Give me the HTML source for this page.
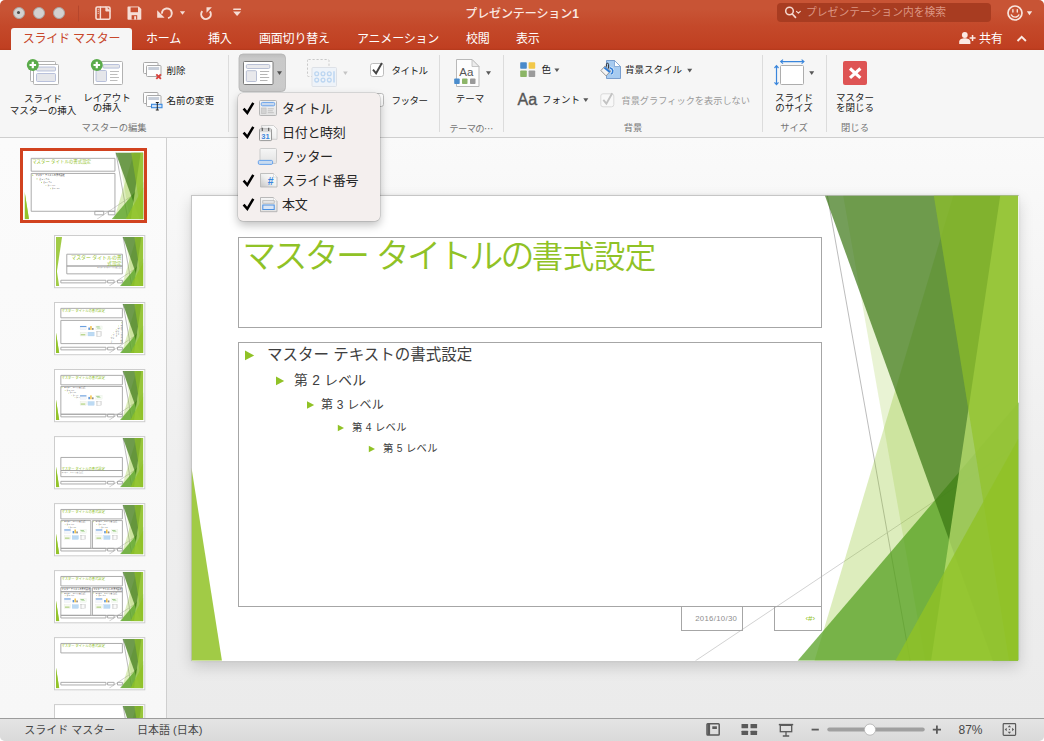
<!DOCTYPE html>
<html lang="ja">
<head>
<meta charset="utf-8">
<title>プレゼンテーション1</title>
<style>
*{box-sizing:border-box;margin:0;padding:0}
html,body{width:1044px;height:741px;overflow:hidden;background:#fff}
#win{position:absolute;left:0;top:0;width:1044px;height:741px;overflow:hidden;border-radius:5px;background:#ececec}
body{position:relative;font-family:"Liberation Sans","Noto Sans CJK JP",sans-serif;color:#222;-webkit-font-smoothing:antialiased}
.abs{position:absolute}
svg{position:absolute;overflow:visible}
/* title bar */
#titlebar{position:absolute;left:0;top:0;width:1044px;height:50px;background:linear-gradient(#c85435 0,#c85435 9px,#c4492a 26px,#c03f21 48px,#b4391c 50px)}
.tl{position:absolute;top:6.500px;width:12.500px;height:12.500px;border-radius:50%;background:#d3d1d0;border:1px solid #a9a3a1}
.tl i{position:absolute;left:3.750px;top:3.750px;width:3px;height:3px;border-radius:50%;background:#4c4c4c}
#wtitle{position:absolute;left:0;width:1044px;top:5px;text-align:center;color:#fbe9e3;font-size:12px;line-height:18px;letter-spacing:-.1px;font-weight:500}
#search{position:absolute;left:777px;top:3px;width:214px;height:19px;border-radius:4px;background:#a83c21}
#search span{position:absolute;left:29px;top:0;line-height:19px;font-size:10.800px;color:#dc9683;white-space:nowrap}
.tab{position:absolute;top:29px;height:21px;line-height:20px;font-size:12px;color:#fff;white-space:nowrap;letter-spacing:-.2px}
#tabactive{position:absolute;left:11px;top:28px;width:121px;height:23px;background:#f6f6f6;border-radius:3px 3px 0 0}
#tabactive span{position:absolute;left:0;width:121px;text-align:center;top:1px;line-height:20px;font-size:12px;color:#c8472b;white-space:nowrap;letter-spacing:-.2px}
/* ribbon */
#ribbon{position:absolute;left:0;top:50px;width:1044px;height:88px;background:#f6f6f6;border-bottom:1px solid #cfcfcf}
.rl{position:absolute;font-size:9.5px;line-height:10px;color:#1a1a1a;white-space:nowrap;font-weight:400;text-align:center}
.gl{position:absolute;font-size:9.3px;line-height:12px;color:#757575;white-space:nowrap;text-align:center;top:121.500px}
.sep{position:absolute;top:55px;width:1px;height:77px;background:#dcdcdc}
.dis{color:#9a9a9a}
/* panels */
#thumbs{position:absolute;left:0;top:138px;width:167px;height:580px;background:linear-gradient(#fbfbfb,#f7f7f7);border-right:1px solid #cfcfcf;overflow:hidden}
#edit{position:absolute;left:167px;top:138px;width:877px;height:580px;background:linear-gradient(#fafafa 0,#f6f6f6 20%,#efefef 55%,#ebebeb 100%);overflow:hidden}
#status{position:absolute;left:0;top:718px;width:1044px;height:23px;background:linear-gradient(#e4e4e4,#d9d9d9);border-top:1px solid #9c9c9c;font-size:11px;color:#484848}
#status span{position:absolute;top:3.500px;line-height:14px;white-space:nowrap}
#slide{position:absolute;left:24px;top:57px;width:828px;height:466px;background:#fff;border:0 solid #c6c6c6;border-width:1px 0 0 1px;box-shadow:0 6px 14px rgba(0,0,0,.15),0 0 3px rgba(0,0,0,.07)}
/* popup */
#popup{position:absolute;left:238px;top:93px;width:142px;height:128px;background:#f4efee;border-radius:5px;box-shadow:0 0 0 .5px rgba(0,0,0,.2),0 4px 10px rgba(0,0,0,.26)}
.mi{position:absolute;left:44px;font-size:13px;line-height:24px;color:#262626;white-space:nowrap;letter-spacing:-.3px}
.ck{position:absolute;left:5px;width:14px;height:12px}
</style>
</head>
<body>
<div id="win">
<svg width="0" height="0" style="position:absolute">
<defs>
<g id="facet">
  <line x1="9371" y1="0" x2="10590.2" y2="6858" stroke="#ababab" stroke-width=".8" vector-effect="non-scaling-stroke"/>
  <line x1="12181" y1="3681.4" x2="7425.3" y2="6858" stroke="#c6c6c6" stroke-width=".8" vector-effect="non-scaling-stroke"/>
  <polygon points="11227,0 12181,0 12181,6858 9181.5,6858" fill="#90c226" fill-opacity=".30"/>
  <polygon points="9603.4,0 12181,0 12181,6858 10811.7,6858" fill="#90c226" fill-opacity=".20"/>
  <polygon points="12192,3048 12192,6858 8932.3,6858" fill="#4f9c1a" fill-opacity=".72"/>
  <polygon points="9334.5,0 12181,0 12181,6858 11808.4,6858" fill="#397512" fill-opacity=".70"/>
  <polygon points="11918.5,0 12181,0 12181,6858 10898.7,6858" fill="#c0e474" fill-opacity=".70"/>
  <polygon points="10939,0 12181,0 12181,6858 12048.4,6858" fill="#90c226" fill-opacity=".65"/>
  <polygon points="12181,3589.9 12181,6858 10371.7,6858" fill="#90c226" fill-opacity=".80"/>
  <polygon points="0,4013.2 0,6858 448.7,6858" fill="#90c226" fill-opacity=".85"/>
</g>
</defs>
</svg>
<div id="titlebar">
  <div class="tl" style="left:12.700px"><i></i></div><div class="tl" style="left:32.700px"></div><div class="tl" style="left:52.700px"></div>
  <svg id="tbsvg" width="1044" height="50" viewBox="0 0 1044 50" style="left:0;top:0;z-index:3">
  <g fill="none" stroke="#f6ddd5" stroke-width="1.600" stroke-linejoin="round" stroke-linecap="round">
    <line x1="78.500" y1="6" x2="78.500" y2="21" stroke="#b5462c" stroke-width="1"/>
    <!-- sidebar -->
    <rect x="96" y="7" width="14" height="12.300" rx="1.200"/>
    <line x1="100.400" y1="7" x2="100.400" y2="19.300" stroke-width="1.400"/>
    <path d="M105.800 7.200v3.900h4.200z" fill="#f6ddd5" stroke-width=".8"/>
    <path d="M98.100 9.300h.3M98.100 11.300h.3M98.100 13.300h.3" stroke-width="1"/>
    <!-- save -->
    <path d="M128.300 7.200h10.200l2 2v9.800h-12.200z" fill="#f6ddd5" stroke-width="1.600"/>
    <rect x="130.600" y="7.400" width="7.400" height="4.800" fill="#c94e2f" stroke="none"/>
    <rect x="131.600" y="15.200" width="5.600" height="4.400" fill="#c94e2f" stroke="none"/>
    <rect x="134.200" y="16.200" width="1.900" height="3.400" fill="#f6ddd5" stroke="none"/>
    <!-- undo -->
    <path d="M162 13.700a4.900 4.900 0 1 1 6 4.400" stroke-width="2" stroke-linecap="butt"/>
    <path d="M157.200 10.200v7.600h7.400z" fill="#f6ddd5" stroke="none"/>
    <path d="M179.900 11.300h5.200l-2.600 3.500z" fill="#f6ddd5" stroke="none"/>
    <!-- redo -->
    <path d="M202.300 11.200a4.800 4.800 0 1 0 7.600 .2" stroke-width="2" stroke-linecap="butt"/>
    <path d="M206.500 7.200h5.400l-5.400 5.500z" fill="#f6ddd5" stroke="none"/>
    <!-- customize -->
    <line x1="233.800" y1="9.200" x2="240.400" y2="9.200" stroke-width="1.500"/>
    <path d="M233.100 11.600h8l-4 4.300z" fill="#f6ddd5" stroke="none"/>
    <!-- search glass -->
    <circle cx="789.500" cy="11" r="3.800" stroke="#f4d8cf" stroke-width="1.500"/>
    <line x1="792.300" y1="14" x2="795.500" y2="17.300" stroke="#f4d8cf" stroke-width="1.700"/>
    <path d="M796.500 11.300l1.900 1.900 1.900-1.900" stroke="#f4d8cf" stroke-width="1.200"/>
    <!-- smiley -->
    <circle cx="1015" cy="13" r="7" stroke="#f8e4dd" stroke-width="1.7"/>
    <path d="M1011.3 14.9c1.6 3 6 3 7.6 0" stroke="#f8e4dd" stroke-width="1.300"/>
    <path d="M1012.9 9.6v2.4M1017.3 9.6v2.4" stroke="#f8e4dd" stroke-width="1.400"/>
    <path d="M1026.8 11.2h5.400l-2.700 4z" fill="#f8e4dd" stroke="none"/>
    <!-- share person -->
    <g fill="#fbeae4" stroke="none">
      <circle cx="964.800" cy="35" r="2.900"/>
      <path d="M959.200 44v-2.200c0-2.600 3-3.600 5.600-3.600s5.600 1 5.600 3.600v2.200z"/>
      <path d="M969.600 37.300h2.200v-2.300h1.500v2.300h2.300v1.500h-2.300v2.300h-1.500v-2.300h-2.200z"/>
    </g>
    <path d="M1017.500 41l4.200-4.200 4.200 4.200" stroke="#fbeae4" stroke-width="1.900" stroke-linejoin="miter" stroke-linecap="butt"/>
  </g>
</svg>
  <div id="wtitle">プレゼンテーション<b>1</b></div>
  <div id="search"><span>プレゼンテーション内を検索</span></div>
  <div id="tabactive"><span>スライド マスター</span></div>
  <div class="tab" style="left:146px">ホーム</div>
  <div class="tab" style="left:208px">挿入</div>
  <div class="tab" style="left:259px">画面切り替え</div>
  <div class="tab" style="left:357px">アニメーション</div>
  <div class="tab" style="left:466px">校閲</div>
  <div class="tab" style="left:516px">表示</div>
  <div class="tab" style="left:979px">共有</div>
</div>
<div id="ribbon"></div>
<svg id="ribsvg" width="1044" height="88" viewBox="0 50 1044 88" style="left:0;top:50px">
  <defs>
    <linearGradient id="gbtn" x1="0" y1="0" x2="0" y2="1"><stop offset="0" stop-color="#bdbdbd"/><stop offset=".12" stop-color="#c9c9c9"/><stop offset="1" stop-color="#cbcbcb"/></linearGradient>
  </defs>
  <!-- insert slide master -->
  <g stroke="#b2b2b2" stroke-width="1" fill="#fff">
    <rect x="30.500" y="61.500" width="25" height="20" rx="1"/>
    <rect x="33.500" y="64.500" width="25" height="20" rx="1"/>
    <g fill="#e5e6ea" stroke="#aab4d4" stroke-width=".8">
      <rect x="36.500" y="67" width="19" height="4" rx="1"/>
      <rect x="36.500" y="73.500" width="19" height="8" rx="1"/>
    </g>
  </g>
  <circle cx="32.800" cy="65" r="6" fill="#5aab4a"/>
  <path d="M29.500 65h6.600M32.800 61.700v6.600" stroke="#fff" stroke-width="2.200"/>
  <!-- insert layout -->
  <g stroke="#b2b2b2" stroke-width="1" fill="#fff">
    <rect x="93.500" y="61.500" width="29" height="23" rx="1"/>
    <g fill="#e5e6ea" stroke="#aab4d4" stroke-width=".8">
      <rect x="103" y="64.500" width="16.500" height="3.600" rx="1"/>
      <rect x="96" y="70.500" width="10.500" height="11" rx="1"/>
    </g>
    <path d="M110 71.500h9M110 74.500h7.500M110 77.500h9M110 80.500h7.500" stroke="#bdbdbd" stroke-width="1"/>
  </g>
  <circle cx="96.800" cy="65" r="6" fill="#5aab4a"/>
  <path d="M93.500 65h6.600M96.800 61.700v6.600" stroke="#fff" stroke-width="2.200"/>
  <!-- delete -->
  <g stroke="#a9a9a9" stroke-width="1" fill="#fdfdfd">
    <rect x="143.500" y="62.500" width="14.500" height="11" rx="1"/>
    <rect x="146.500" y="65.500" width="14.500" height="11" rx="1"/>
    <rect x="148.300" y="67" width="10.800" height="3" fill="#c7ced9" stroke="none"/>
  </g>
  <path d="M156.300 74.300l4.600 4.600M160.900 74.300l-4.600 4.600" stroke="#d8413c" stroke-width="1.900"/>
  <!-- rename -->
  <g stroke="#a9a9a9" stroke-width="1" fill="#fdfdfd">
    <rect x="143.500" y="92.500" width="14.500" height="11" rx="1"/>
    <rect x="146.500" y="95.500" width="14.500" height="11" rx="1"/>
    <rect x="148.300" y="97" width="10.800" height="3" fill="#c7ced9" stroke="none"/>
  </g>
  <rect x="151.500" y="104.300" width="10.500" height="3.400" fill="#cfe2f8" stroke="#3b8ae0" stroke-width="1.100"/>
  <path d="M155.800 102.500h3M155.800 110h3M157.300 102.500v7.500" stroke="#222" stroke-width="1"/>
  <!-- master layout (pressed) -->
  <rect x="239" y="54" width="46.500" height="37.500" rx="4" fill="url(#gbtn)" stroke="#b4b4b4" stroke-width=".8"/>
  <g stroke="#7a7a7a" stroke-width="1" fill="#fff">
    <rect x="243.500" y="61.500" width="29.500" height="23" rx="1"/>
    <g fill="#e9e9ec" stroke="#aab2cc" stroke-width=".8">
      <rect x="246.300" y="64.500" width="23.500" height="4" rx="1.200"/>
      <rect x="246.300" y="70.700" width="10.200" height="10.800" rx="1"/>
    </g>
    <path d="M260 71.500h9.200M260 74.500h7.500M260 77.500h9.200M260 80.500h7.500" stroke="#b5b5b5" stroke-width="1"/>
  </g>
  <path d="M277 71.200h5l-2.5 3.7z" fill="#505050"/>
  <!-- insert placeholder (disabled) -->
  <rect x="307.500" y="59.500" width="21.500" height="17" rx="1" fill="none" stroke="#c9c9c9" stroke-width="1" stroke-dasharray="2.200 1.800"/>
  <rect x="312" y="67.500" width="24.500" height="19" rx="1" fill="#eef3f9" stroke="#dde1e7" stroke-width="1"/>
  <g fill="none" stroke="#bcd6f1" stroke-width="1.300">
    <circle cx="316.700" cy="73.700" r="1.900"/><circle cx="323" cy="73.700" r="1.900"/><circle cx="329.300" cy="73.700" r="1.900"/>
    <circle cx="316.700" cy="80.100" r="1.900"/><circle cx="323" cy="80.100" r="1.900"/><circle cx="329.300" cy="80.100" r="1.900"/>
    <path d="M334 71.200v11.200" stroke-width="1.500"/>
  </g>
  <path d="M343.100 71.500h4.600l-2.300 3.500z" fill="#c4c4c4"/>
  <!-- checkboxes -->
  <rect x="370.500" y="63.500" width="13" height="13" rx="2.200" fill="#fff" stroke="#bdbdbd"/>
  <path d="M373 69.600l3.100 3.700 5.800-10.300" fill="none" stroke="#454545" stroke-width="1.900"/>
  <rect x="370.500" y="93.500" width="13" height="13" rx="2.200" fill="#fff" stroke="#bdbdbd"/>
  <!-- theme -->
  <path d="M456.500 59.500h15.500l7 7v20h-22.500z" fill="#fdfdfd" stroke="#b9b9b9"/>
  <path d="M472 59.500v7h7z" fill="#ececec" stroke="#b9b9b9" stroke-width=".8"/>
  <rect x="454.200" y="78.400" width="5.500" height="5.600" rx=".8" fill="#4a8ccc"/>
  <rect x="462" y="78.400" width="5.500" height="5.600" rx=".8" fill="#8db568"/>
  <rect x="470" y="78.400" width="5.500" height="5.600" rx=".8" fill="#9a9a9a"/>
  <text x="466.300" y="75.600" font-family="'Liberation Sans',sans-serif" font-size="11.500" fill="#555" text-anchor="middle">Aa</text>
  <path d="M486 71.300h5l-2.5 3.7z" fill="#585858"/>
  <!-- colors -->
  <rect x="520.200" y="62.200" width="6.600" height="6.600" rx=".8" fill="#4a8acb"/>
  <rect x="528.600" y="62.200" width="6.600" height="6.600" rx=".8" fill="#f2c849"/>
  <rect x="520.200" y="70.400" width="6.600" height="6.600" rx=".8" fill="#8bb566"/>
  <rect x="528.600" y="70.400" width="6.600" height="6.600" rx=".8" fill="#9b9b9b"/>
  <path d="M554.400 68.400h5l-2.5 3.7z" fill="#585858"/>
  <!-- fonts -->
  <text x="517.600" y="104.500" font-family="'Liberation Sans',sans-serif" font-size="16" fill="#555" stroke="#555" stroke-width=".35">Aa</text>
  <path d="M583.300 98.300h5l-2.5 3.7z" fill="#585858"/>
  <!-- background styles -->
  <path d="M606.5 60.5h8l6 6v12h-14z" fill="#a7cbf0" stroke="#6f96c9" stroke-width=".9"/>
  <path d="M614.5 60.5v6h6z" fill="#fff" stroke="#6f96c9" stroke-width=".7"/>
  <path d="M609.8 67.8c3.600 .8 4 4.300 1.400 6.400" fill="none" stroke="#e8f2fc" stroke-width="2.800"/>
  <path d="M609.8 67.8c3.600 .8 4 4.300 1.400 6.400" fill="none" stroke="#2e7bd6" stroke-width="1.600"/>
  <path d="M600.9 70.6l4-4.500 5.700 4.900-4.500 4.900z" fill="#f3f3f3" stroke="#8b8b8b" stroke-width=".9"/>
  <path d="M604.3 67.4l5.500 4.500" stroke="#2e7bd6" stroke-width="2"/>
  <path d="M606.4 66.5v-2c0-1.700 2.200-1.700 2.200 0v4" fill="none" stroke="#2b2b2b" stroke-width="1"/>
  <path d="M687.2 68.800h5l-2.500 3.700z" fill="#585858"/>
  <!-- hide bg graphics checkbox -->
  <rect x="600.800" y="93.800" width="13" height="13" rx="2.200" fill="#f8f8f8" stroke="#dadada"/>
  <path d="M603.300 99.900l3.100 3.700 5.800-10.300" fill="none" stroke="#c2c2c2" stroke-width="1.900"/>
  <!-- slide size -->
  <rect x="780.500" y="65.500" width="23" height="19" rx="1" fill="#fff" stroke="#adadad"/>
  <g stroke="#3a86dc" stroke-width="1.200" fill="none">
    <path d="M781 61.600h22.600M776.500 66v18.300"/>
    <path d="M783 59.600l-2.300 2 2.300 2M801.600 59.600l2.300 2-2.300 2M774.500 68l2-2.300 2 2.300M774.500 82.300l2 2.300 2-2.300"/>
  </g>
  <path d="M809.200 71.300h5l-2.5 3.7z" fill="#585858"/>
  <!-- close master -->
  <rect x="843" y="61" width="24" height="24" rx="2" fill="#de5454"/>
  <path d="M850 68.500l10.400 9.400M860.400 68.500l-10.400 9.400" stroke="#fff" stroke-width="3.100"/>
</svg>
<div class="sep" style="left:228px"></div>
<div class="sep" style="left:439px"></div>
<div class="sep" style="left:503px"></div>
<div class="sep" style="left:762px"></div>
<div class="sep" style="left:826px"></div>
<div class="rl" style="left:0;width:86px;top:93px;line-height:11.500px">スライド<br>マスターの挿入</div>
<div class="rl" style="left:64px;width:86px;top:93px;line-height:10.300px">レイアウト<br>の挿入</div>
<div class="rl" style="left:166.5px;top:66px">削除</div>
<div class="rl" style="left:166.5px;top:95.6px">名前の変更</div>
<div class="rl" style="left:391.6px;top:66px;letter-spacing:-.55px">タイトル</div>
<div class="rl" style="left:391.6px;top:96px;letter-spacing:-.55px">フッター</div>
<div class="rl" style="left:427px;width:86px;top:94px">テーマ</div>
<div class="rl" style="left:541.500px;top:64.500px">色</div>
<div class="rl" style="left:542px;top:95px">フォント</div>
<div class="rl" style="left:625px;top:65px">背景スタイル</div>
<div class="rl dis" style="left:621.500px;top:95.500px;font-weight:400;font-size:9.200px">背景グラフィックを表示しない</div>
<div class="rl" style="left:751px;width:86px;top:92.500px;line-height:10px">スライド<br>のサイズ</div>
<div class="rl" style="left:812px;width:86px;top:93px;line-height:10px">マスター<br>を閉じる</div>
<div class="gl" style="left:64px;width:100px">マスターの編集</div>
<div class="gl" style="left:421px;width:100px;letter-spacing:-.6px">テーマの<span style="font-family:'Noto Sans CJK JP','Liberation Sans',sans-serif">…</span></div>
<div class="gl" style="left:583px;width:100px">背景</div>
<div class="gl" style="left:744px;width:100px">サイズ</div>
<div class="gl" style="left:805px;width:100px">閉じる</div>

<div id="thumbs">
<svg width="166" height="580" viewBox="0 138 166 580" style="left:0;top:0" font-family="'Liberation Sans','Noto Sans CJK JP',sans-serif">
<defs><clipPath id="fclip"><rect x="0" y="0" width="12192" height="6858"/></clipPath></defs>
<rect x="21.500" y="149.500" width="124" height="72" fill="#fff" stroke="#d1421f" stroke-width="3"/>
<g transform="translate(24.6,152.4) scale(0.009744)" clip-path="url(#fclip)"><use href="#facet"/><polygon points="0,4013.2 0,6858 448.7,6858" fill="#90c226" fill-opacity=".85"/><rect x="677.3" y="609.6" width="8596.7" height="1320.8" fill="none" stroke="#a3a3a3" stroke-width=".9" vector-effect="non-scaling-stroke"/><text x="774" y="1054" font-size="457" fill="#90c226" font-weight="400">マスター タイトルの書式設定</text><rect x="677.3" y="2160.6" width="8596.7" height="3880.8" fill="none" stroke="#a3a3a3" stroke-width=".9" vector-effect="non-scaling-stroke"/><rect x="7205.1" y="6041.4" width="911.9" height="365.1" fill="none" stroke="#a3a3a3" stroke-width=".9" vector-effect="non-scaling-stroke"/><rect x="8590.7" y="6041.4" width="683.3" height="365.1" fill="none" stroke="#a3a3a3" stroke-width=".9" vector-effect="non-scaling-stroke"/><path d="M788.3 2268l132.82 66-132.82 66z" fill="#90c226"/><text x="1112" y="2417" font-size="229" fill="#404040">マスター テキストの書式設定</text><path d="M1237.3 2661l117.74 59-117.74 59z" fill="#90c226"/><text x="1510" y="2793" font-size="203" fill="#404040">第 2 レベル</text><path d="M1694.3 3024l103.24 52-103.24 52z" fill="#90c226"/><text x="1908" y="3140" font-size="178" fill="#404040">第 3 レベル</text><path d="M2166.3 3372l88.16 44-88.16 44z" fill="#90c226"/><text x="2365" y="3471" font-size="152" fill="#404040">第 4 レベル</text><path d="M2623.3 3682l88.16 44-88.16 44z" fill="#90c226"/><text x="2822" y="3781" font-size="152" fill="#404040">第 5 レベル</text></g>
<rect x="54.500" y="235.5" width="90.300" height="52.200" fill="#fff" stroke="#cdcdcd" stroke-width="1"/>
<g transform="translate(56,237.0) scale(0.007160)" clip-path="url(#fclip)"><use href="#facet"/><polygon points="0,0 842.6,0 0,5666.2" fill="#90c226" fill-opacity=".85"/><rect x="1507" y="2404.5" width="7767" height="1646.3" fill="none" stroke="#a3a3a3" stroke-width=".9" vector-effect="non-scaling-stroke"/><rect x="1507" y="4050.8" width="7767" height="1096.9" fill="none" stroke="#a3a3a3" stroke-width=".9" vector-effect="non-scaling-stroke"/><rect x="677.3" y="6041.4" width="6297.6" height="365.1" fill="none" stroke="#a3a3a3" stroke-width=".9" vector-effect="non-scaling-stroke"/><rect x="7205.1" y="6041.4" width="911.9" height="365.1" fill="none" stroke="#a3a3a3" stroke-width=".9" vector-effect="non-scaling-stroke"/><rect x="8590.7" y="6041.4" width="683.3" height="365.1" fill="none" stroke="#a3a3a3" stroke-width=".9" vector-effect="non-scaling-stroke"/><text x="9180" y="3120" font-size="686" fill="#90c226" font-weight="400" text-anchor="end">マスター タイトルの書</text><text x="9180" y="3900" font-size="686" fill="#90c226" font-weight="400" text-anchor="end">式設定</text><text x="9180" y="4330" font-size="229" fill="#7f7f7f" text-anchor="end">マスター サブタイトルの書式設定</text></g>
<rect x="54.500" y="302.5" width="90.300" height="52.200" fill="#fff" stroke="#cdcdcd" stroke-width="1"/>
<g transform="translate(56,304.0) scale(0.007160)" clip-path="url(#fclip)"><use href="#facet"/><polygon points="0,4013.2 0,6858 448.7,6858" fill="#90c226" fill-opacity=".85"/><rect x="677.3" y="609.6" width="8596.7" height="1320.8" fill="none" stroke="#a3a3a3" stroke-width=".9" vector-effect="non-scaling-stroke"/><text x="774" y="1054" font-size="457" fill="#90c226" font-weight="400">マスター タイトルの書式設定</text><rect x="677.3" y="2290" width="8596.7" height="3240" fill="none" stroke="#a3a3a3" stroke-width=".9" vector-effect="non-scaling-stroke"/><rect x="677.3" y="6041.4" width="6297.6" height="365.1" fill="none" stroke="#a3a3a3" stroke-width=".9" vector-effect="non-scaling-stroke"/><rect x="7205.1" y="6041.4" width="911.9" height="365.1" fill="none" stroke="#a3a3a3" stroke-width=".9" vector-effect="non-scaling-stroke"/><rect x="8590.7" y="6041.4" width="683.3" height="365.1" fill="none" stroke="#a3a3a3" stroke-width=".9" vector-effect="non-scaling-stroke"/><rect x="3360" y="3070" width="880" height="545" fill="#f4f6fa" stroke="#d5dbe6" stroke-width="30"/><rect x="3360" y="3070" width="880" height="150" fill="#6aa0e0"/><rect x="4520" y="3290" width="220" height="325" fill="#5b95d8"/><rect x="4770" y="3080" width="220" height="535" fill="#f3c44f"/><rect x="5030" y="3350" width="220" height="265" fill="#8c8c8c"/><rect x="5560" y="3070" width="880" height="545" fill="#f5faf2" stroke="#dfe9d8" stroke-width="30"/><rect x="5620" y="3150" width="480" height="100" fill="#86bf70"/><rect x="5740" y="3330" width="480" height="90" fill="#a8d496"/><rect x="3360" y="3925" width="880" height="545" fill="#f7f9f2" stroke="#d9dccf" stroke-width="30"/><rect x="3450" y="4195" width="640" height="190" fill="#b9d68f"/><rect x="4460" y="3925" width="880" height="545" fill="#bcdaf3" stroke="#9cc4ea" stroke-width="30"/><rect x="5640" y="3885" width="720" height="625" fill="#f2f2f2" stroke="#9b9b9b" stroke-width="30"/><rect x="5800" y="3885" width="400" height="625" fill="#fafafa" stroke="#b5b5b5" stroke-width="30"/><g transform="translate(9050,2480) rotate(90)"><path d="M111.0 -153l132.82 66-132.82 66z" fill="#90c226"/><text x="435" y="-4" font-size="229" fill="#404040">マスター テキストの書式</text><path d="M560.0 240l117.74 59-117.74 59z" fill="#90c226"/><text x="833" y="372" font-size="203" fill="#404040">第 2 レベル</text><path d="M1017.0 603l103.24 52-103.24 52z" fill="#90c226"/><text x="1231" y="719" font-size="178" fill="#404040">第 3 レベル</text><path d="M1489.0 951l88.16 44-88.16 44z" fill="#90c226"/><text x="1688" y="1050" font-size="152" fill="#404040">第 4 レベル</text><path d="M1946.0 1261l88.16 44-88.16 44z" fill="#90c226"/><text x="2145" y="1360" font-size="152" fill="#404040">第 5 レベル</text></g></g>
<rect x="54.500" y="369.5" width="90.300" height="52.200" fill="#fff" stroke="#cdcdcd" stroke-width="1"/>
<g transform="translate(56,371.0) scale(0.007160)" clip-path="url(#fclip)"><use href="#facet"/><polygon points="0,4013.2 0,6858 448.7,6858" fill="#90c226" fill-opacity=".85"/><rect x="677.3" y="609.6" width="8596.7" height="1320.8" fill="none" stroke="#a3a3a3" stroke-width=".9" vector-effect="non-scaling-stroke"/><text x="774" y="1054" font-size="457" fill="#90c226" font-weight="400">マスター タイトルの書式設定</text><rect x="677.3" y="2160.6" width="8596.7" height="3880.8" fill="none" stroke="#a3a3a3" stroke-width=".9" vector-effect="non-scaling-stroke"/><rect x="677.3" y="6041.4" width="6297.6" height="365.1" fill="none" stroke="#a3a3a3" stroke-width=".9" vector-effect="non-scaling-stroke"/><rect x="7205.1" y="6041.4" width="911.9" height="365.1" fill="none" stroke="#a3a3a3" stroke-width=".9" vector-effect="non-scaling-stroke"/><rect x="8590.7" y="6041.4" width="683.3" height="365.1" fill="none" stroke="#a3a3a3" stroke-width=".9" vector-effect="non-scaling-stroke"/><path d="M788.3 2268l132.82 66-132.82 66z" fill="#90c226"/><text x="1112" y="2417" font-size="229" fill="#404040">マスター テキストの書式設定</text><path d="M1237.3 2661l117.74 59-117.74 59z" fill="#90c226"/><text x="1510" y="2793" font-size="203" fill="#404040">第 2 レベル</text><path d="M1694.3 3024l103.24 52-103.24 52z" fill="#90c226"/><text x="1908" y="3140" font-size="178" fill="#404040">第 3 レベル</text><path d="M2166.3 3372l88.16 44-88.16 44z" fill="#90c226"/><text x="2365" y="3471" font-size="152" fill="#404040">第 4 レベル</text><path d="M2623.3 3682l88.16 44-88.16 44z" fill="#90c226"/><text x="2822" y="3781" font-size="152" fill="#404040">第 5 レベル</text><rect x="3360" y="3400" width="880" height="545" fill="#f4f6fa" stroke="#d5dbe6" stroke-width="30"/><rect x="3360" y="3400" width="880" height="150" fill="#6aa0e0"/><rect x="4520" y="3620" width="220" height="325" fill="#5b95d8"/><rect x="4770" y="3410" width="220" height="535" fill="#f3c44f"/><rect x="5030" y="3680" width="220" height="265" fill="#8c8c8c"/><rect x="5560" y="3400" width="880" height="545" fill="#f5faf2" stroke="#dfe9d8" stroke-width="30"/><rect x="5620" y="3480" width="480" height="100" fill="#86bf70"/><rect x="5740" y="3660" width="480" height="90" fill="#a8d496"/><rect x="3360" y="4255" width="880" height="545" fill="#f7f9f2" stroke="#d9dccf" stroke-width="30"/><rect x="3450" y="4525" width="640" height="190" fill="#b9d68f"/><rect x="4460" y="4255" width="880" height="545" fill="#bcdaf3" stroke="#9cc4ea" stroke-width="30"/><rect x="5640" y="4215" width="720" height="625" fill="#f2f2f2" stroke="#9b9b9b" stroke-width="30"/><rect x="5800" y="4215" width="400" height="625" fill="#fafafa" stroke="#b5b5b5" stroke-width="30"/></g>
<rect x="54.500" y="436.6" width="90.300" height="52.200" fill="#fff" stroke="#cdcdcd" stroke-width="1"/>
<g transform="translate(56,438.1) scale(0.007160)" clip-path="url(#fclip)"><use href="#facet"/><polygon points="0,4013.2 0,6858 448.7,6858" fill="#90c226" fill-opacity=".85"/><rect x="677.3" y="2700.9" width="8596.7" height="1826.3" fill="none" stroke="#a3a3a3" stroke-width=".9" vector-effect="non-scaling-stroke"/><rect x="677.3" y="4527.2" width="8596.7" height="860.4" fill="none" stroke="#a3a3a3" stroke-width=".9" vector-effect="non-scaling-stroke"/><rect x="677.3" y="6041.4" width="6297.6" height="365.1" fill="none" stroke="#a3a3a3" stroke-width=".9" vector-effect="non-scaling-stroke"/><rect x="7205.1" y="6041.4" width="911.9" height="365.1" fill="none" stroke="#a3a3a3" stroke-width=".9" vector-effect="non-scaling-stroke"/><rect x="8590.7" y="6041.4" width="683.3" height="365.1" fill="none" stroke="#a3a3a3" stroke-width=".9" vector-effect="non-scaling-stroke"/><text x="774" y="4400" font-size="457" fill="#90c226" font-weight="400">マスター タイトルの書式設定</text><text x="774" y="4810" font-size="229" fill="#7f7f7f">マスター テキストの書式設定</text></g>
<rect x="54.500" y="503.6" width="90.300" height="52.200" fill="#fff" stroke="#cdcdcd" stroke-width="1"/>
<g transform="translate(56,505.1) scale(0.007160)" clip-path="url(#fclip)"><use href="#facet"/><polygon points="0,4013.2 0,6858 448.7,6858" fill="#90c226" fill-opacity=".85"/><rect x="677.3" y="609.6" width="8596.7" height="1320.8" fill="none" stroke="#a3a3a3" stroke-width=".9" vector-effect="non-scaling-stroke"/><text x="774" y="1054" font-size="457" fill="#90c226" font-weight="400">マスター タイトルの書式設定</text><rect x="677.3" y="2160.6" width="4184" height="3880.8" fill="none" stroke="#a3a3a3" stroke-width=".9" vector-effect="non-scaling-stroke"/><rect x="5090" y="2160.6" width="4184" height="3880.8" fill="none" stroke="#a3a3a3" stroke-width=".9" vector-effect="non-scaling-stroke"/><rect x="677.3" y="6041.4" width="6297.6" height="365.1" fill="none" stroke="#a3a3a3" stroke-width=".9" vector-effect="non-scaling-stroke"/><rect x="7205.1" y="6041.4" width="911.9" height="365.1" fill="none" stroke="#a3a3a3" stroke-width=".9" vector-effect="non-scaling-stroke"/><rect x="8590.7" y="6041.4" width="683.3" height="365.1" fill="none" stroke="#a3a3a3" stroke-width=".9" vector-effect="non-scaling-stroke"/><path d="M788.3 2268l132.82 66-132.82 66z" fill="#90c226"/><text x="1112" y="2417" font-size="229" fill="#404040">マスター テキストの書式設定</text><path d="M1237.3 2661l117.74 59-117.74 59z" fill="#90c226"/><text x="1510" y="2793" font-size="203" fill="#404040">第 2 レベル</text><path d="M1694.3 3024l103.24 52-103.24 52z" fill="#90c226"/><text x="1908" y="3140" font-size="178" fill="#404040">第 3 レベル</text><path d="M5201.0 2268l132.82 66-132.82 66z" fill="#90c226"/><text x="5525" y="2417" font-size="229" fill="#404040">マスター テキストの書式設定</text><path d="M5650.0 2661l117.74 59-117.74 59z" fill="#90c226"/><text x="5923" y="2793" font-size="203" fill="#404040">第 2 レベル</text><path d="M6107.0 3024l103.24 52-103.24 52z" fill="#90c226"/><text x="6321" y="3140" font-size="178" fill="#404040">第 3 レベル</text><rect x="1160" y="3400" width="880" height="545" fill="#f4f6fa" stroke="#d5dbe6" stroke-width="30"/><rect x="1160" y="3400" width="880" height="150" fill="#6aa0e0"/><rect x="2320" y="3620" width="220" height="325" fill="#5b95d8"/><rect x="2570" y="3410" width="220" height="535" fill="#f3c44f"/><rect x="2830" y="3680" width="220" height="265" fill="#8c8c8c"/><rect x="3360" y="3400" width="880" height="545" fill="#f5faf2" stroke="#dfe9d8" stroke-width="30"/><rect x="3420" y="3480" width="480" height="100" fill="#86bf70"/><rect x="3540" y="3660" width="480" height="90" fill="#a8d496"/><rect x="1160" y="4255" width="880" height="545" fill="#f7f9f2" stroke="#d9dccf" stroke-width="30"/><rect x="1250" y="4525" width="640" height="190" fill="#b9d68f"/><rect x="2260" y="4255" width="880" height="545" fill="#bcdaf3" stroke="#9cc4ea" stroke-width="30"/><rect x="3440" y="4215" width="720" height="625" fill="#f2f2f2" stroke="#9b9b9b" stroke-width="30"/><rect x="3600" y="4215" width="400" height="625" fill="#fafafa" stroke="#b5b5b5" stroke-width="30"/><rect x="5570" y="3400" width="880" height="545" fill="#f4f6fa" stroke="#d5dbe6" stroke-width="30"/><rect x="5570" y="3400" width="880" height="150" fill="#6aa0e0"/><rect x="6730" y="3620" width="220" height="325" fill="#5b95d8"/><rect x="6980" y="3410" width="220" height="535" fill="#f3c44f"/><rect x="7240" y="3680" width="220" height="265" fill="#8c8c8c"/><rect x="7770" y="3400" width="880" height="545" fill="#f5faf2" stroke="#dfe9d8" stroke-width="30"/><rect x="7830" y="3480" width="480" height="100" fill="#86bf70"/><rect x="7950" y="3660" width="480" height="90" fill="#a8d496"/><rect x="5570" y="4255" width="880" height="545" fill="#f7f9f2" stroke="#d9dccf" stroke-width="30"/><rect x="5660" y="4525" width="640" height="190" fill="#b9d68f"/><rect x="6670" y="4255" width="880" height="545" fill="#bcdaf3" stroke="#9cc4ea" stroke-width="30"/><rect x="7850" y="4215" width="720" height="625" fill="#f2f2f2" stroke="#9b9b9b" stroke-width="30"/><rect x="8010" y="4215" width="400" height="625" fill="#fafafa" stroke="#b5b5b5" stroke-width="30"/></g>
<rect x="54.500" y="570.6" width="90.300" height="52.200" fill="#fff" stroke="#cdcdcd" stroke-width="1"/>
<g transform="translate(56,572.1) scale(0.007160)" clip-path="url(#fclip)"><use href="#facet"/><polygon points="0,4013.2 0,6858 448.7,6858" fill="#90c226" fill-opacity=".85"/><rect x="677.3" y="609.6" width="8596.7" height="1320.8" fill="none" stroke="#a3a3a3" stroke-width=".9" vector-effect="non-scaling-stroke"/><text x="774" y="1054" font-size="457" fill="#90c226" font-weight="400">マスター タイトルの書式設定</text><rect x="675.7" y="2161" width="4185.6" height="576.3" fill="none" stroke="#a3a3a3" stroke-width=".9" vector-effect="non-scaling-stroke"/><rect x="675.7" y="2737.2" width="4185.6" height="3304.1" fill="none" stroke="#a3a3a3" stroke-width=".9" vector-effect="non-scaling-stroke"/><rect x="5088.4" y="2161" width="4185.6" height="576.3" fill="none" stroke="#a3a3a3" stroke-width=".9" vector-effect="non-scaling-stroke"/><rect x="5088.4" y="2737.2" width="4185.6" height="3304.1" fill="none" stroke="#a3a3a3" stroke-width=".9" vector-effect="non-scaling-stroke"/><rect x="677.3" y="6041.4" width="6297.6" height="365.1" fill="none" stroke="#a3a3a3" stroke-width=".9" vector-effect="non-scaling-stroke"/><rect x="7205.1" y="6041.4" width="911.9" height="365.1" fill="none" stroke="#a3a3a3" stroke-width=".9" vector-effect="non-scaling-stroke"/><rect x="8590.7" y="6041.4" width="683.3" height="365.1" fill="none" stroke="#a3a3a3" stroke-width=".9" vector-effect="non-scaling-stroke"/><text x="774" y="2440" font-size="305" fill="#404040">マスター テキストの書式設定</text><text x="5186" y="2440" font-size="305" fill="#404040">マスター テキストの書式設定</text><path d="M786.7 2844l132.82 66-132.82 66z" fill="#90c226"/><text x="1111" y="2993" font-size="229" fill="#404040">マスター テキストの書式設定</text><path d="M1235.7 3237l117.74 59-117.74 59z" fill="#90c226"/><text x="1509" y="3369" font-size="203" fill="#404040">第 2 レベル</text><path d="M5199.4 2844l132.82 66-132.82 66z" fill="#90c226"/><text x="5523" y="2993" font-size="229" fill="#404040">マスター テキストの書式設定</text><path d="M5648.4 3237l117.74 59-117.74 59z" fill="#90c226"/><text x="5921" y="3369" font-size="203" fill="#404040">第 2 レベル</text><rect x="1160" y="3680" width="880" height="545" fill="#f4f6fa" stroke="#d5dbe6" stroke-width="30"/><rect x="1160" y="3680" width="880" height="150" fill="#6aa0e0"/><rect x="2320" y="3900" width="220" height="325" fill="#5b95d8"/><rect x="2570" y="3690" width="220" height="535" fill="#f3c44f"/><rect x="2830" y="3960" width="220" height="265" fill="#8c8c8c"/><rect x="3360" y="3680" width="880" height="545" fill="#f5faf2" stroke="#dfe9d8" stroke-width="30"/><rect x="3420" y="3760" width="480" height="100" fill="#86bf70"/><rect x="3540" y="3940" width="480" height="90" fill="#a8d496"/><rect x="1160" y="4535" width="880" height="545" fill="#f7f9f2" stroke="#d9dccf" stroke-width="30"/><rect x="1250" y="4805" width="640" height="190" fill="#b9d68f"/><rect x="2260" y="4535" width="880" height="545" fill="#bcdaf3" stroke="#9cc4ea" stroke-width="30"/><rect x="3440" y="4495" width="720" height="625" fill="#f2f2f2" stroke="#9b9b9b" stroke-width="30"/><rect x="3600" y="4495" width="400" height="625" fill="#fafafa" stroke="#b5b5b5" stroke-width="30"/><rect x="5570" y="3680" width="880" height="545" fill="#f4f6fa" stroke="#d5dbe6" stroke-width="30"/><rect x="5570" y="3680" width="880" height="150" fill="#6aa0e0"/><rect x="6730" y="3900" width="220" height="325" fill="#5b95d8"/><rect x="6980" y="3690" width="220" height="535" fill="#f3c44f"/><rect x="7240" y="3960" width="220" height="265" fill="#8c8c8c"/><rect x="7770" y="3680" width="880" height="545" fill="#f5faf2" stroke="#dfe9d8" stroke-width="30"/><rect x="7830" y="3760" width="480" height="100" fill="#86bf70"/><rect x="7950" y="3940" width="480" height="90" fill="#a8d496"/><rect x="5570" y="4535" width="880" height="545" fill="#f7f9f2" stroke="#d9dccf" stroke-width="30"/><rect x="5660" y="4805" width="640" height="190" fill="#b9d68f"/><rect x="6670" y="4535" width="880" height="545" fill="#bcdaf3" stroke="#9cc4ea" stroke-width="30"/><rect x="7850" y="4495" width="720" height="625" fill="#f2f2f2" stroke="#9b9b9b" stroke-width="30"/><rect x="8010" y="4495" width="400" height="625" fill="#fafafa" stroke="#b5b5b5" stroke-width="30"/></g>
<rect x="54.500" y="637.6" width="90.300" height="52.200" fill="#fff" stroke="#cdcdcd" stroke-width="1"/>
<g transform="translate(56,639.1) scale(0.007160)" clip-path="url(#fclip)"><use href="#facet"/><polygon points="0,4013.2 0,6858 448.7,6858" fill="#90c226" fill-opacity=".85"/><rect x="677.3" y="609.6" width="8596.7" height="1320.8" fill="none" stroke="#a3a3a3" stroke-width=".9" vector-effect="non-scaling-stroke"/><text x="774" y="1054" font-size="457" fill="#90c226" font-weight="400">マスター タイトルの書式設定</text><rect x="677.3" y="6041.4" width="6297.6" height="365.1" fill="none" stroke="#a3a3a3" stroke-width=".9" vector-effect="non-scaling-stroke"/><rect x="7205.1" y="6041.4" width="911.9" height="365.1" fill="none" stroke="#a3a3a3" stroke-width=".9" vector-effect="non-scaling-stroke"/><rect x="8590.7" y="6041.4" width="683.3" height="365.1" fill="none" stroke="#a3a3a3" stroke-width=".9" vector-effect="non-scaling-stroke"/></g>
<rect x="54.500" y="704.6" width="90.300" height="52.200" fill="#fff" stroke="#cdcdcd" stroke-width="1"/>
<g transform="translate(56,706.1) scale(0.007160)" clip-path="url(#fclip)"><use href="#facet"/><polygon points="0,4013.2 0,6858 448.7,6858" fill="#90c226" fill-opacity=".85"/><rect x="677.3" y="6041.4" width="6297.6" height="365.1" fill="none" stroke="#a3a3a3" stroke-width=".9" vector-effect="non-scaling-stroke"/><rect x="7205.1" y="6041.4" width="911.9" height="365.1" fill="none" stroke="#a3a3a3" stroke-width=".9" vector-effect="non-scaling-stroke"/><rect x="8590.7" y="6041.4" width="683.3" height="365.1" fill="none" stroke="#a3a3a3" stroke-width=".9" vector-effect="non-scaling-stroke"/></g>
</svg>
</div>
<div id="edit">
  <div id="slide"></div>
  <svg id="slidesvg" width="877" height="580" viewBox="167 138 877 580" style="left:0;top:0">
    <defs><clipPath id="sclip"><rect x="191.5" y="195.5" width="827.3" height="465.3"/></clipPath></defs>
    <g clip-path="url(#sclip)"><use href="#facet" transform="translate(191.5,195.5) scale(0.067856)"/></g>
    <g fill="none" stroke="#a6a6a6" stroke-width="1">
      <rect x="238.5" y="237.5" width="583" height="90"/>
      <rect x="238.5" y="342.5" width="583" height="264"/>
      <rect x="681.5" y="606.5" width="61" height="24"/>
      <rect x="774.5" y="606.5" width="47" height="24"/>
    </g>
    <g font-family="'Liberation Sans','Noto Sans CJK JP',sans-serif">
      <text x="242.300" y="268" font-size="34" fill="#90c226" font-weight="350" letter-spacing="-2.800" word-spacing="2">マスター タイトルの<tspan font-size="31.500" letter-spacing="-.5">書式設定</tspan></text>
      <g fill="#90c226">
        <path d="M245 350.600l9.200 4.800-9.200 4.800z"/>
        <path d="M276 376.600l8.200 4.300-8.200 4.300z"/>
        <path d="M307 401.300l7.200 3.700-7.200 3.700z"/>
        <path d="M337.8 424.8l6.200 3.200-6.200 3.200z"/>
        <path d="M368.8 445.8l6.200 3.200-6.200 3.200z"/>
      </g>
      <g fill="#404040">
        <text x="267" y="359.500" font-size="15.500">マスター テキストの書式設定</text>
        <text x="294" y="385" font-size="13.8" letter-spacing=".25">第 2 レベル</text>
        <text x="321" y="408.5" font-size="12" letter-spacing=".25">第 3 レベル</text>
        <text x="352" y="431" font-size="10.3" letter-spacing=".3">第 4 レベル</text>
        <text x="383" y="452" font-size="10.3" letter-spacing=".3">第 5 レベル</text>
        <text x="695.200" y="621" font-size="7.800" fill="#8e8e8e" letter-spacing=".3">2016/10/30</text>
      </g>
      <text x="805.500" y="621" font-size="7.800" fill="#90c226">‹#›</text>
    </g>
  </svg>
</div>
<div id="status">
<svg width="1044" height="24" viewBox="0 717 1044 24" style="left:0;top:-2px">
  <g fill="none" stroke="#5a5a5a" stroke-width="1.500">
    <rect x="707" y="723.700" width="12.200" height="11.400" rx=".8"/>
    <path d="M708.800 723.700v11.400" stroke-width="2.600"/>
    <rect x="712.300" y="726.300" width="4.600" height="2.700" fill="#5a5a5a" stroke="none"/>
    <g fill="#5a5a5a" stroke="none">
      <rect x="741.500" y="724" width="6.600" height="4.300" rx=".6"/><rect x="750.500" y="724" width="6.600" height="4.300" rx=".6"/>
      <rect x="741.500" y="730.700" width="6.600" height="4.300" rx=".6"/><rect x="750.500" y="730.700" width="6.600" height="4.300" rx=".6"/>
    </g>
    <rect x="780.300" y="725.300" width="11.400" height="6.400" stroke-width="1.300"/>
    <path d="M778.800 724.600h14.400" stroke-width="1.500"/>
    <path d="M786 731.700v3.800M782.800 736h6.400" stroke-width="1.300"/>
    <path d="M811.600 729.600h7.200" stroke-width="1.800"/>
    <path d="M932.800 729.600h8.200M936.900 725.500v8.200" stroke-width="1.800"/>
    <path d="M829.300 729.600h93.400" stroke="#a0a0a0" stroke-width="4" stroke-linecap="round"/>
    <circle cx="870" cy="729.600" r="5.600" fill="#fff" stroke="#b0b0b0" stroke-width=".8"/>
    <rect x="1003.200" y="723.700" width="12.400" height="11.600" rx=".8" stroke-width="1.200"/>
    <g fill="#5a5a5a" stroke="none">
      <path d="M1009.400 725.200l1.700 2h-3.400zM1009.400 733.800l1.700-2h-3.400zM1004.700 729.500l2-1.700v3.400zM1014.100 729.500l-2-1.700v3.400z"/>
      <rect x="1008.900" y="728.900" width="1" height="1.200"/>
    </g>
  </g>
</svg>
  <span style="left:24.300px">スライド マスター</span>
  <span style="left:137px">日本語 (日本)</span>
  <span style="left:958.500px;font-size:12px">87%</span>
</div>
<div id="popup">
<svg width="142" height="129" viewBox="238 92 142 129" style="left:0;top:-1px">
  <defs>
    <linearGradient id="pg1" x1="0" y1="0" x2="0" y2="1"><stop offset="0" stop-color="#f6f6f6"/><stop offset="1" stop-color="#e2e2e2"/></linearGradient>
    <linearGradient id="pg2" x1="1" y1="0" x2="0" y2="1"><stop offset="0" stop-color="#ffffff"/><stop offset=".5" stop-color="#f0f0f0"/><stop offset="1" stop-color="#c4c4c4"/></linearGradient>
  </defs>
  <g fill="none" stroke="#000" stroke-width="2.500" stroke-linejoin="miter">
    <path d="M243.600 108.600l3.700 4.300 6-10"/>
    <path d="M243.600 132.600l3.700 4.300 6-10"/>
    <path d="M243.600 180.600l3.700 4.300 6-10"/>
    <path d="M243.600 204.600l3.700 4.300 6-10"/>
  </g>
  <!-- title icon -->
  <rect x="259.500" y="100.500" width="17" height="15" rx="1" fill="url(#pg1)" stroke="#b5b5b5"/>
  <rect x="261.300" y="102.400" width="13.400" height="3.400" rx="1.200" fill="#c9d9ee" stroke="#5b9bea" stroke-width=".9"/>
  <rect x="261.500" y="108" width="4.600" height="5.600" fill="#d2d2d2" stroke="#bdbdbd" stroke-width=".6"/>
  <path d="M267.800 108.800h6M267.800 110.800h5M267.800 112.700h6" stroke="#bdbdbd" stroke-width=".9"/>
  <!-- date icon -->
  <path d="M261.500 125.500h12l3.500 3.500v10.300h-15.500z" fill="url(#pg2)" stroke="#c6c6c6" stroke-width=".8"/>
  <rect x="259.500" y="129" width="12" height="11.600" rx=".8" fill="#f4f4f4" stroke="#8d8d8d" stroke-width=".9"/>
  <rect x="259.900" y="129.400" width="11.200" height="2.800" fill="#d9d9d9"/>
  <path d="M262.300 127.800v3.200M268.700 127.800v3.200" stroke="#555" stroke-width="1.100"/>
  <text x="265.500" y="139.300" font-family="'Liberation Sans',sans-serif" font-weight="700" font-size="7.500" fill="#3b86de" text-anchor="middle">31</text>
  <!-- footer icon -->
  <rect x="260" y="148.500" width="16.500" height="15" rx="1" fill="url(#pg1)" stroke="#cbcbcb"/>
  <rect x="258.300" y="160.400" width="14.300" height="4" rx="1.300" fill="#c9dbf0" stroke="#5b9bea" stroke-width=".9"/>
  <!-- slide number icon -->
  <path d="M260.500 173.500h13l3.500 3.500v10h-16.500z" fill="url(#pg2)" stroke="#b9b9b9" stroke-width=".9"/>
  <path d="M273.500 173.500v3.500h3.500" fill="#fff" stroke="#c9c9c9" stroke-width=".6"/>
  <text x="270.700" y="185" font-family="'Liberation Sans',sans-serif" font-weight="700" font-size="10.500" fill="#3b86de" text-anchor="middle">#</text>
  <!-- body icon -->
  <path d="M260.500 197.500h13l3.500 3.500v10.700h-16.500z" fill="url(#pg1)" stroke="#b1b1b1" stroke-width=".9"/>
  <path d="M273.500 197.500v3.500h3.500" fill="#fff" stroke="#c9c9c9" stroke-width=".6"/>
  <rect x="262.800" y="200.700" width="11.400" height="2.500" fill="#ececec" stroke="#b3b3b3" stroke-width=".8"/>
  <rect x="262.800" y="205" width="11.400" height="4.500" fill="#dbe6f5" stroke="#4a90e2" stroke-width="1"/>
</svg>
<div class="mi" style="top:4px">タイトル</div>
<div class="mi" style="top:28px">日付と時刻</div>
<div class="mi" style="top:52px">フッター</div>
<div class="mi" style="top:76px">スライド番号</div>
<div class="mi" style="top:100px">本文</div>
</div>
</div>
</body>
</html>
